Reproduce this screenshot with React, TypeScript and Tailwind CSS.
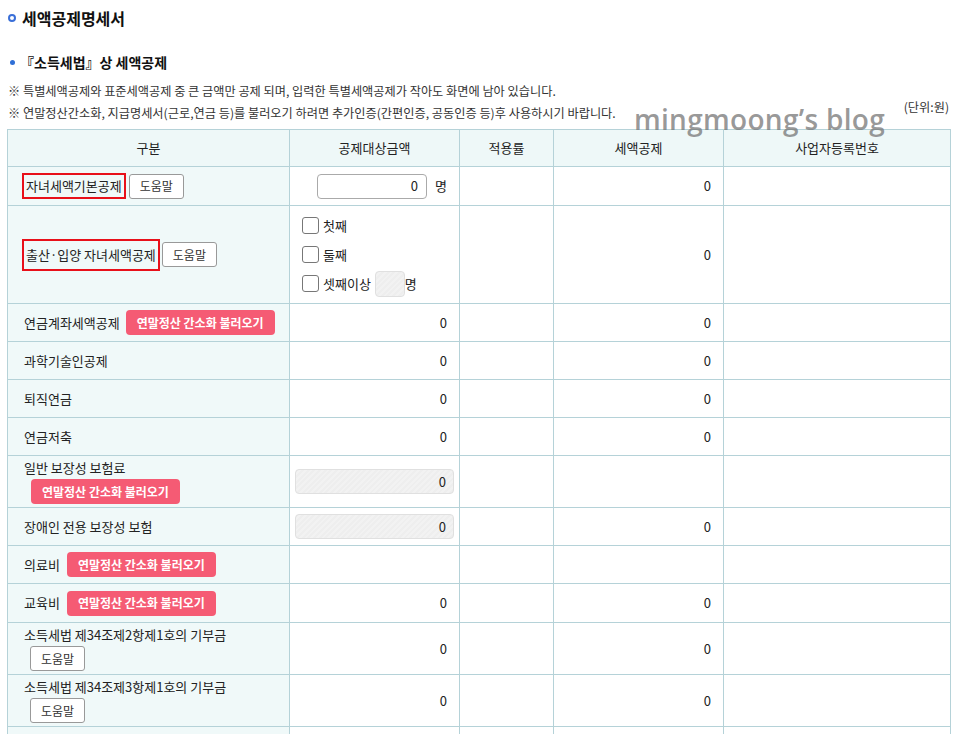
import React from "react";

const font = { fontFamily: '"Noto Sans CJK KR", "Noto Sans", sans-serif' };

function HelpBtn() {
  return (
    <button className="h-[25px] px-[10px] border border-[#999] rounded-[3px] bg-white text-[12px] text-[#333] leading-none">
      도움말
    </button>
  );
}

function LoadBtn() {
  return (
    <button className="h-[25px] px-[11px] rounded-[4px] bg-[#f55b74] text-white text-[12px] font-bold leading-none">
      연말정산 간소화 불러오기
    </button>
  );
}

function Hatch({ className }: { className: string }) {
  return (
    <div
      className={
        "rounded-[4px] border border-[#e0e0e0] bg-[repeating-linear-gradient(135deg,#eeeeee_0px,#eeeeee_2px,#f2f2f2_2px,#f2f2f2_4px)] " +
        className
      }
    />
  );
}

function Check({ label, children }: { label: string; children?: React.ReactNode }) {
  return (
    <div className="flex items-center h-[26px]">
      <span className="w-[17px] h-[17px] border border-[#777] rounded-[3px] bg-white mr-[4px]" />
      <span>{label}</span>
      {children}
    </div>
  );
}

const td = "border border-[#b5d2d8] h-[38px]";
const first = td + " bg-[#f0f9f9] pl-[16px] pr-2 text-left";
const num = td + " text-right pr-[12px]";

type Row = { label: React.ReactNode; amount?: string; credit?: string };

export default function App() {
  const simple: Row[] = [
    {
      label: (
        <div className="flex items-center gap-[6px]">
          <span>연금계좌세액공제</span>
          <LoadBtn />
        </div>
      ),
      amount: "0",
      credit: "0",
    },
    { label: "과학기술인공제", amount: "0", credit: "0" },
    { label: "퇴직연금", amount: "0", credit: "0" },
    { label: "연금저축", amount: "0", credit: "0" },
  ];

  return (
    <div className="relative w-[960px] h-[734px] overflow-hidden bg-white text-[#222] text-[13px]" style={font}>
      <div className="flex items-center gap-[6px] pl-[8px] pt-[8px] h-[28px]">
        <span className="w-[8px] h-[8px] rounded-full border-2 border-[#3a6fd8]" />
        <span className="text-[16px] font-bold text-[#111]">세액공제명세서</span>
      </div>
      <div className="flex items-center gap-[5px] pl-[10px] mt-[24px] h-[20px]">
        <span className="w-[5px] h-[5px] rounded-full bg-[#2f6fd6]" />
        <span className="text-[14px] font-bold text-[#111]">『소득세법』상 세액공제</span>
      </div>
      <div className="pl-[8px] mt-[8px] text-[12.2px] text-[#333] leading-[22px]">
        <div>※ 특별세액공제와 표준세액공제 중 큰 금액만 공제 되며, 입력한 특별세액공제가 작아도 화면에 남아 있습니다.</div>
        <div className="flex justify-between pr-[11px]">
          <span>※ 연말정산간소화, 지급명세서(근로,연금 등)를 불러오기 하려면 추가인증(간편인증, 공동인증 등)후 사용하시기 바랍니다.</span>
          <span className="-mt-[6px]">(단위:원)</span>
        </div>
      </div>

      <table className="ml-[7px] mt-[5px] w-[943px] border-collapse table-fixed text-[13px]">
        <colgroup>
          <col className="w-[282px]" />
          <col className="w-[170px]" />
          <col className="w-[94px]" />
          <col className="w-[170px]" />
          <col className="w-[227px]" />
        </colgroup>
        <thead>
          <tr className="bg-[#eef8f8] h-[37px]">
            <th className="border border-[#b5d2d8] font-normal">구분</th>
            <th className="border border-[#b5d2d8] font-normal">공제대상금액</th>
            <th className="border border-[#b5d2d8] font-normal">적용률</th>
            <th className="border border-[#b5d2d8] font-normal">세액공제</th>
            <th className="border border-[#b5d2d8] font-normal">사업자등록번호</th>
          </tr>
        </thead>
        <tbody>
          <tr className="h-[39px]">
            <td className={td + " bg-[#f0f9f9] pl-[14px]"}>
              <div className="flex items-center gap-[3px]">
                <span className="border-2 border-[#e8101a] px-[2px] h-[26px] flex items-center">자녀세액기본공제</span>
                <HelpBtn />
              </div>
            </td>
            <td className={td}>
              <div className="flex items-center justify-end gap-[8px] pr-[12px]">
                <div className="w-[110px] h-[25px] border border-[#aaa] rounded-[4px] flex items-center justify-end pr-[8px]">0</div>
                <span>명</span>
              </div>
            </td>
            <td className={td} />
            <td className={num}>0</td>
            <td className={td} />
          </tr>
          <tr className="h-[98px]">
            <td className={td + " bg-[#f0f9f9] pl-[14px]"}>
              <div className="flex items-center gap-[2px]">
                <span className="border-2 border-[#e8101a] px-[2px] h-[32px] flex items-center">출산·입양 자녀세액공제</span>
                <HelpBtn />
              </div>
            </td>
            <td className={td + " pl-[12px]"}>
              <div className="flex flex-col gap-[3px]">
                <Check label="첫째" />
                <Check label="둘째" />
                <Check label="셋째이상">
                  <Hatch className="w-[30px] h-[26px] ml-[4px]" />
                  <span>명</span>
                </Check>
              </div>
            </td>
            <td className={td} />
            <td className={num}>0</td>
            <td className={td} />
          </tr>
          {simple.map((r, i) => (
            <tr key={i} className="h-[38px]">
              <td className={first}>{r.label}</td>
              <td className={num}>{r.amount}</td>
              <td className={td} />
              <td className={num}>{r.credit}</td>
              <td className={td} />
            </tr>
          ))}
          <tr className="h-[52px]">
            <td className={first}>
              <div className="leading-[18px]">일반 보장성 보험료</div>
              <div className="pl-[7px] mt-[2px]">
                <LoadBtn />
              </div>
            </td>
            <td className={td + " px-[5px]"}>
              <div className="relative">
                <Hatch className="w-[159px] h-[25px]" />
                <span className="absolute right-[8px] top-[3px]">0</span>
              </div>
            </td>
            <td className={td} />
            <td className={td} />
            <td className={td} />
          </tr>
          <tr className="h-[38px]">
            <td className={first}>장애인 전용 보장성 보험</td>
            <td className={td + " px-[5px]"}>
              <div className="relative">
                <Hatch className="w-[159px] h-[25px]" />
                <span className="absolute right-[8px] top-[3px]">0</span>
              </div>
            </td>
            <td className={td} />
            <td className={num}>0</td>
            <td className={td} />
          </tr>
          <tr className="h-[38px]">
            <td className={first}>
              <div className="flex items-center gap-[7px]">
                <span>의료비</span>
                <LoadBtn />
              </div>
            </td>
            <td className={td} />
            <td className={td} />
            <td className={td} />
            <td className={td} />
          </tr>
          <tr className="h-[39px]">
            <td className={first}>
              <div className="flex items-center gap-[7px]">
                <span>교육비</span>
                <LoadBtn />
              </div>
            </td>
            <td className={num}>0</td>
            <td className={td} />
            <td className={num}>0</td>
            <td className={td} />
          </tr>
          {["소득세법 제34조제2항제1호의 기부금", "소득세법 제34조제3항제1호의 기부금"].map((t) => (
            <tr key={t} className="h-[52px]">
              <td className={first}>
                <div className="leading-[18px]">{t}</div>
                <div className="pl-[6px] mt-[2px]">
                  <HelpBtn />
                </div>
              </td>
              <td className={num}>0</td>
              <td className={td} />
              <td className={num}>0</td>
              <td className={td} />
            </tr>
          ))}
          <tr className="h-[38px]">
            <td className={first} />
            <td className={td} />
            <td className={td} />
            <td className={td} />
            <td className={td} />
          </tr>
        </tbody>
      </table>

      <div
        className="absolute left-[634px] top-[105px] text-[28px] font-semibold text-[#777]/75 tracking-[0.3px] leading-none pointer-events-none"
        style={{ fontFamily: '"Open Sans", "Liberation Sans", sans-serif' }}
      >
        mingmoong’s blog
      </div>
    </div>
  );
}
